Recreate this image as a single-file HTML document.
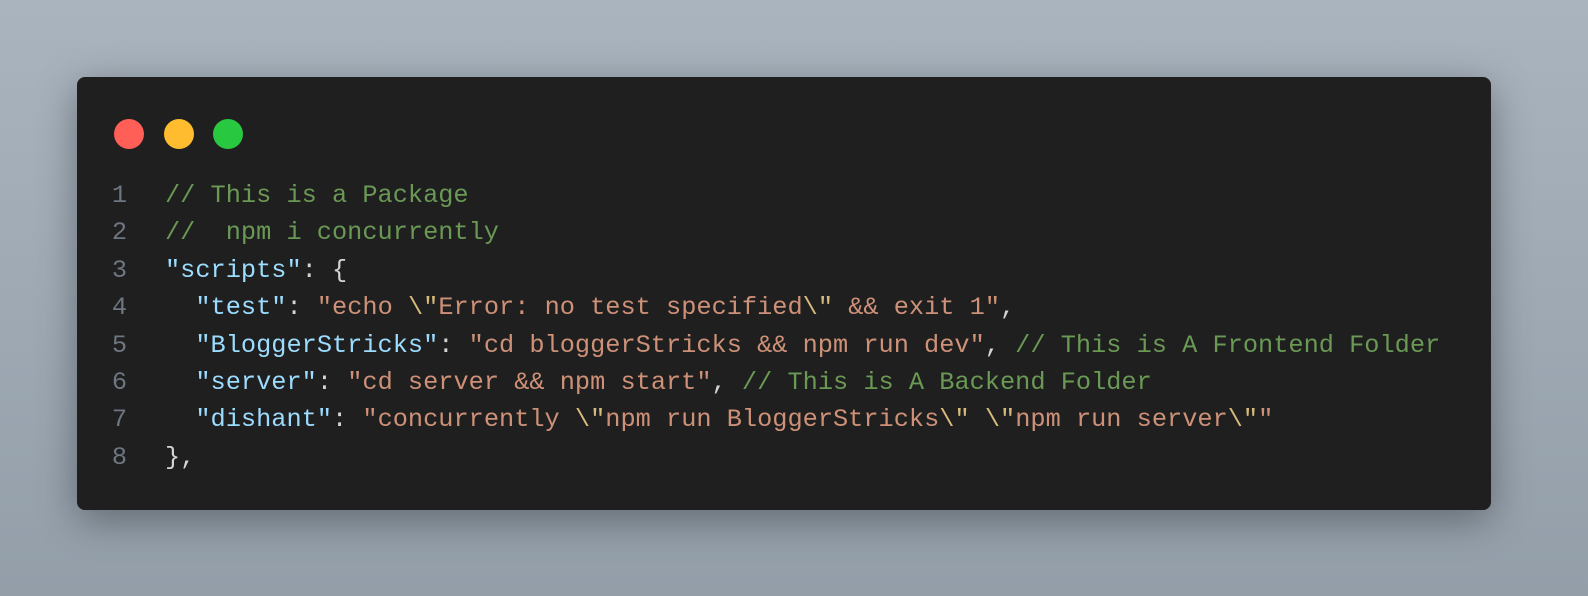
<!DOCTYPE html>
<html><head><meta charset="utf-8"><style>
html,body{margin:0;padding:0;width:1588px;height:596px;overflow:hidden;background:linear-gradient(180deg,#aab4be 0%,#9ca7b2 60%,#939ea9 100%);}
.win{position:absolute;left:77px;top:77px;width:1414px;height:433px;background:#1f1f1f;border-radius:8px;box-shadow:0 10px 40px rgba(0,0,0,.35);}
.dot{position:absolute;top:42px;width:30px;height:30px;border-radius:50%;}
.code{position:absolute;left:0;top:100px;font-family:"Liberation Mono",monospace;font-size:25.3px;line-height:37.4px;white-space:pre;color:#d4d4d4;}
.ln{display:inline-block;width:88px;text-align:right;color:#6e7681;box-sizing:border-box;padding-right:38px;}
.c{color:#6a9955}.k{color:#9cdcfe}.s{color:#ce9178}.e{color:#d7ba7d}
</style></head><body>
<div class="win">
<div class="dot" style="left:37px;background:#ff5f57"></div>
<div class="dot" style="left:87px;background:#febc2e"></div>
<div class="dot" style="left:136px;background:#28c840"></div>
<div class="code"><span class="ln">1</span><span class="c">// This is a Package</span>
<span class="ln">2</span><span class="c">//  npm i concurrently</span>
<span class="ln">3</span><span class="k">"scripts"</span>: {
<span class="ln">4</span>  <span class="k">"test"</span>: <span class="s">"echo </span><span class="e">\"</span><span class="s">Error: no test specified</span><span class="e">\"</span><span class="s"> &amp;&amp; exit 1"</span>,
<span class="ln">5</span>  <span class="k">"BloggerStricks"</span>: <span class="s">"cd bloggerStricks &amp;&amp; npm run dev"</span>, <span class="c">// This is A Frontend Folder</span>
<span class="ln">6</span>  <span class="k">"server"</span>: <span class="s">"cd server &amp;&amp; npm start"</span>, <span class="c">// This is A Backend Folder</span>
<span class="ln">7</span>  <span class="k">"dishant"</span>: <span class="s">"concurrently </span><span class="e">\"</span><span class="s">npm run BloggerStricks</span><span class="e">\"</span><span class="s"> </span><span class="e">\"</span><span class="s">npm run server</span><span class="e">\"</span><span class="s">"</span>
<span class="ln">8</span>},</div>
</div>
</body></html>
